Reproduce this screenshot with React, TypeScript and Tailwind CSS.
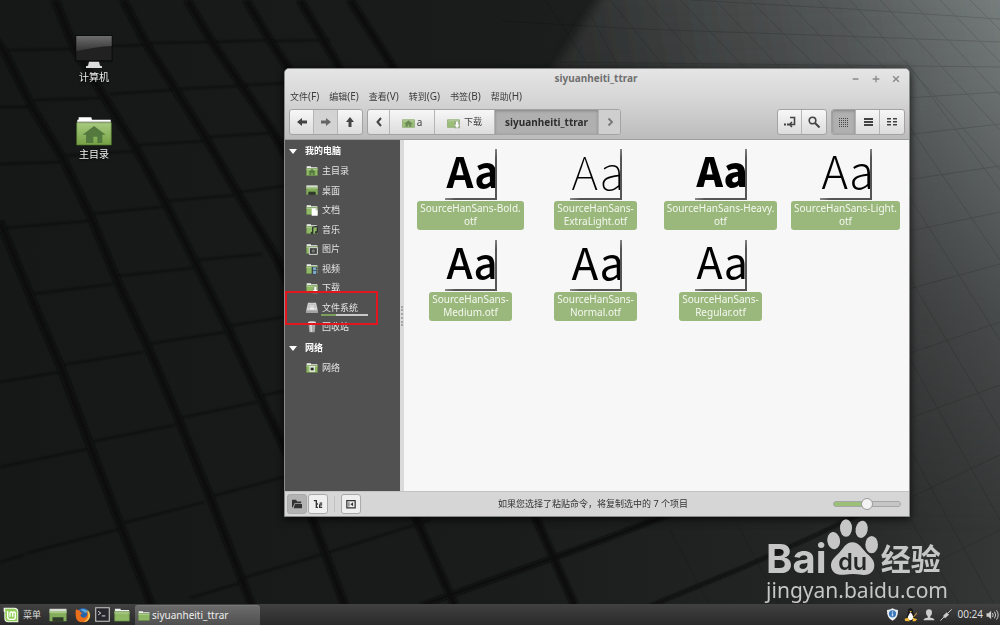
import type { ReactNode } from "react";

const sans = "font-['Noto_Sans','Noto_Sans_CJK_SC',sans-serif]";

type Point = [number, number];

const bands: Point[][] = [
  [[0, 222], [32, 300], [60, 365], [90, 445], [121, 527], [152, 606]],
  [[-4, 40], [5, 53], [32, 107], [62, 157], [90, 215], [120, 287], [148, 347], [178, 418], [210, 497], [242, 580], [252, 606]],
  [[55, 0], [75, 50], [106, 100], [137, 150], [166, 204], [197, 266], [228, 328], [260, 397], [290, 460], [345, 606]],
  [[123, 0], [148, 47], [177, 92], [207, 140], [238, 194], [276, 257], [300, 310]],
  [[187, 0], [212, 42], [242, 86], [273, 132], [300, 180]],
  [[246, 0], [271, 42], [300, 86]],
  [[300, 0], [335, 60], [350, 90]],
  [[350, 0], [390, 62], [400, 80]],
  [[410, 505], [455, 606]],
  [[530, 505], [575, 606]],
];

const seams: Point[][] = [
  [[8, 50], [75, 49]], [[77, 47], [145, 45]], [[150, 43], [208, 42]], [[216, 42], [267, 40]], [[274, 41], [330, 40]],
  [[0, 107], [32, 107]], [[34, 100], [108, 98]], [[110, 94], [172, 90]], [[180, 89], [238, 86]], [[245, 85], [290, 83]],
  [[0, 164], [60, 162]], [[62, 156], [135, 151]], [[138, 145], [205, 141]], [[208, 137], [270, 133]],
  [[5, 228], [88, 221]], [[90, 214], [163, 207]], [[167, 201], [238, 195]], [[241, 192], [284, 186]],
  [[32, 294], [113, 284]], [[118, 276], [193, 268]], [[197, 260], [262, 254]],
  [[0, 382], [60, 372]], [[62, 365], [143, 352]], [[148, 344], [225, 332]], [[228, 326], [284, 317]],
  [[0, 467], [87, 449]], [[90, 442], [175, 425]], [[180, 418], [257, 402]], [[260, 396], [284, 391]],
  [[0, 562], [24, 555]], [[27, 553], [120, 529]], [[123, 523], [205, 502]], [[210, 497], [284, 477]],
  [[190, 598], [240, 583]], [[243, 578], [330, 552], [430, 520]],
];

function Wallpaper() {
  return (
    <svg
      aria-hidden="true"
      className="absolute inset-0 h-full w-full"
      preserveAspectRatio="none"
      viewBox="0 0 1000 625"
    >
      <defs>
        <linearGradient id="wall" x1="0" x2="1" y1="0" y2="0">
          <stop offset="0" stopColor="#161817" />
          <stop offset="0.5" stopColor="#1a1c1b" />
          <stop offset="0.8" stopColor="#232524" />
          <stop offset="1" stopColor="#353737" />
        </linearGradient>
        <linearGradient gradientUnits="userSpaceOnUse" id="beam" x1="570" x2="1000" y1="70" y2="0">
          <stop offset="0" stopColor="#2d2f2e" />
          <stop offset="0.3" stopColor="#414444" />
          <stop offset="0.65" stopColor="#565a5a" />
          <stop offset="1" stopColor="#767d7c" />
        </linearGradient>
        <linearGradient id="fade" x1="0" x2="0" y1="0" y2="1">
          <stop offset="0" stopColor="#fff" />
          <stop offset="0.15" stopColor="#fff" stopOpacity="0.85" />
          <stop offset="0.5" stopColor="#fff" stopOpacity="0.35" />
          <stop offset="0.85" stopColor="#fff" stopOpacity="0" />
        </linearGradient>
        <mask id="fadeMask">
          <rect fill="url(#fade)" height="625" width="1000" />
        </mask>
        <filter id="soft">
          <feGaussianBlur stdDeviation="5" />
        </filter>
        <filter id="edge">
          <feGaussianBlur stdDeviation="1" />
        </filter>
      </defs>
      <rect fill="url(#wall)" height="625" width="1000" />
      <g mask="url(#fadeMask)">
        <path d="M612 -20 L535 100 L535 660 H1030 V-20Z" fill="url(#beam)" filter="url(#soft)" />
      </g>
      <g fill="none" filter="url(#edge)" stroke="#0a0c0b">
        {bands.map((band) => (
          <polyline key={band.join()} points={band.join(" ")} strokeWidth="7" />
        ))}
        {seams.map((seam) => (
          <polyline key={seam.join()} opacity="0.6" points={seam.join(" ")} strokeWidth="1.6" />
        ))}
        <path d="M420 606 L600 541 L670 514" strokeWidth="5" />
        <path d="M650 606 L737 570 L812 537 L860 514" strokeWidth="3" />
      </g>
      <g fill="none" opacity="0.13" stroke="#000">
        <path d="M500 21 L640 29 L840 36 L1000 42 M690 0 L850 9 L1000 19 M560 62 L1000 67" />
        <path d="M545 0 L590 68 M590 14 L618 66 M610 0 L665 68 M645 0 L705 68 M680 0 L745 68 M715 0 L780 68 M750 0 L818 68 M785 0 L852 68 M818 0 L885 68 M850 0 L1000 170 M880 0 L1000 130 M910 0 L1000 95 M940 0 L1000 62 M970 0 L1000 30" />
        <path d="M905 98 L1000 92 M905 135 L1000 124 M905 180 L1000 166 M905 232 L1000 212 M905 290 L1000 264 M905 355 L1000 322 M905 420 L1000 385 M905 500 L1000 455 M880 590 L1000 530" />
        <path d="M905 60 L1000 190 M905 120 L1000 260 M905 190 L1000 340 M905 270 L1000 430 M905 350 L1000 520 M905 440 L995 606 M840 510 L900 606 M730 510 L780 606 M670 530 L710 606 M905 510 L960 606" />
      </g>
    </svg>
  );
}

function FolderIcon({ className = "h-3 w-3", children }: { className?: string; children?: ReactNode }) {
  return (
    <svg aria-hidden="true" className={className} viewBox="0 0 36 36">
      <path d="M2 4h13v3h19v7H2z" fill="#f0f2ee" />
      <path d="M1 10h34v22H1z" fill="#8fb864" />
      <path d="M1 10h34v5H1z" fill="#a9c98a" />
      <path d="M1.500 10.500h33v21h-33z" fill="none" stroke="#55763a" />
      {children}
    </svg>
  );
}

const house = <path d="M18 12 6 22h4v8h6v-6h4v6h6v-8h4z" fill="#567a3e" />;
const downArrow = (
  <>
    <path d="M20 14h15v20H20z" fill="#8fa37c" />
    <path d="M25 15h6v9h4l-7 10-7-10h4z" fill="#fff" />
  </>
);

function DesktopIcon({ className = "h-3 w-3" }: { className?: string }) {
  return (
    <svg aria-hidden="true" className={className} preserveAspectRatio="none" viewBox="0 0 36 36">
      <path d="M1 4h34v7H1z" fill="#d9ddd5" />
      <path d="M1 9h34v23H1z" fill="#84ad5b" />
      <path d="M1 9h34v5H1z" fill="#a7c888" />
      <path d="M7 23h22v10H7z" fill="#2f3b28" />
    </svg>
  );
}

const places: { name: string; icon: ReactNode }[] = [
  { name: "主目录", icon: <FolderIcon>{house}</FolderIcon> },
  { name: "桌面", icon: <DesktopIcon /> },
  {
    name: "文档",
    icon: (
      <FolderIcon>
        <path d="M17 13h13l5 5v17H17z" fill="#fff" />
        <path d="M30 13v5h5" fill="none" stroke="#aaa" strokeWidth="2" />
      </FolderIcon>
    ),
  },
  {
    name: "音乐",
    icon: (
      <FolderIcon>
        <path d="m19 13 15-3v17M20 13v16" fill="none" stroke="#303430" strokeWidth="4" />
        <circle cx="18" cy="30" fill="#303430" r="4" />
        <circle cx="31" cy="28" fill="#303430" r="4" />
      </FolderIcon>
    ),
  },
  {
    name: "图片",
    icon: (
      <FolderIcon>
        <path d="M10 14h24v20H10z" fill="#3b3e3a" stroke="#d9d9d9" strokeWidth="3" />
        <circle cx="22" cy="24" fill="#777" r="5" />
      </FolderIcon>
    ),
  },
  {
    name: "视频",
    icon: (
      <FolderIcon>
        <path d="M17 12h18v22H17z" fill="#38434a" />
        <path d="M21 13h9v9h-9zM21 24h9v9h-9z" fill="#7ba6c4" />
        <path d="M33 13v20" stroke="#ddd" strokeDasharray="3 2" strokeWidth="2" />
      </FolderIcon>
    ),
  },
  { name: "下载", icon: <FolderIcon>{downArrow}</FolderIcon> },
  {
    name: "文件系统",
    icon: (
      <svg aria-hidden="true" className="h-3 w-3" viewBox="0 0 36 36">
        <path d="M6 2h24l5 22v9H1v-9z" fill="#d4d4d4" />
        <path d="M1 25h34v8H1z" fill="#a3a3a3" />
        <ellipse cx="18" cy="13" fill="none" rx="10" ry="7" stroke="#aaa" strokeWidth="2" />
        <path d="M13 17h10l3 5H10z" fill="#f3f3f3" />
      </svg>
    ),
  },
  {
    name: "回收站",
    icon: (
      <svg aria-hidden="true" className="h-3 w-3" viewBox="0 0 36 36">
        <path d="M7 4h22l-3 30H10z" fill="#a9a9a9" />
        <path d="M12 8h5l1 24h-4z" fill="#dedede" />
        <ellipse cx="18" cy="5" fill="#e0e0e0" rx="12" ry="4" />
      </svg>
    ),
  },
];

const files = [
  { label: "SourceHanSans-Bold.\notf", style: "text-[42px] font-bold" },
  { label: "SourceHanSans-\nExtraLight.otf", style: "text-[46px] font-thin" },
  { label: "SourceHanSans-Heavy.\notf", style: "text-[40px] font-black" },
  { label: "SourceHanSans-Light.\notf", style: "text-[45px] font-light" },
  { label: "SourceHanSans-\nMedium.otf", style: "text-[42px] font-medium" },
  { label: "SourceHanSans-\nNormal.otf", style: "text-[44px] font-normal" },
  { label: "SourceHanSans-\nRegular.otf", style: "text-[43px] font-normal" },
];

const menus = [
  ["文件", "(F)"],
  ["编辑", "(E)"],
  ["查看", "(V)"],
  ["转到", "(G)"],
  ["书签", "(B)"],
  ["帮助", "(H)"],
];

function ToolGroup({ children }: { children: ReactNode }) {
  return (
    <div className="flex h-[26px] divide-x divide-[#b5b5b5] overflow-hidden rounded-[3px] border border-[#a3a3a3] bg-linear-to-b from-[#f7f7f7] to-[#dcdcdc]">
      {children}
    </div>
  );
}

function ToolButton({ label, className = "w-6", children }: { label: string; className?: string; children: ReactNode }) {
  return (
    <button aria-label={label} className={`flex items-center justify-center ${className}`} type="button">
      {children}
    </button>
  );
}

function Glyph({ d, className = "size-3" }: { d: string; className?: string }) {
  return (
    <svg aria-hidden="true" className={className} fill="currentColor" viewBox="0 0 12 12">
      <path d={d} />
    </svg>
  );
}

function Toolbar() {
  return (
    <div className="flex items-center px-1 pb-1 text-[#444]">
      <ToolGroup>
        <ToolButton label="后退"><Glyph d="M1 6 6 2v2.500h5v3H6V10z" /></ToolButton>
        <ToolButton className="w-6 bg-[#d3d3d3] text-[#666]" label="前进"><Glyph d="M11 6 6 2v2.500H1v3h5V10z" /></ToolButton>
        <ToolButton label="上级"><Glyph d="M6 1 2 6h2.500v5h3V6H10z" /></ToolButton>
      </ToolGroup>
      <div className="ml-1">
        <ToolGroup>
          <ToolButton className="w-[22px]" label="向左">
            <svg aria-hidden="true" className="size-3" fill="none" stroke="currentColor" strokeWidth="2" viewBox="0 0 12 12"><path d="M8 2 4.500 6 8 10" /></svg>
          </ToolButton>
          <button className="flex w-[45px] items-center justify-center gap-0.5 text-[10px]" type="button">
            <FolderIcon className="size-[13px] opacity-85">{house}</FolderIcon>a
          </button>
          <button className="flex w-[60px] items-center justify-center gap-1 text-[9px]" type="button">
            <FolderIcon className="size-[13px] opacity-85">{downArrow}</FolderIcon>下载
          </button>
          <button className="w-[104px] bg-[#b0b0b0] text-[10px] font-bold text-[#2e2e2e] shadow-[inset_0_1px_3px_rgba(0,0,0,0.25)]" type="button">
            siyuanheiti_ttrar
          </button>
          <ToolButton className="w-[21px] bg-[#cfcfcf] text-[#777]" label="向右">
            <svg aria-hidden="true" className="size-3" fill="none" stroke="currentColor" strokeWidth="1.800" viewBox="0 0 12 12"><path d="M4.500 2.500 8 6 4.500 9.500" /></svg>
          </ToolButton>
        </ToolGroup>
      </div>
      <div className="ml-auto flex gap-1">
        <ToolGroup>
          <ToolButton label="位置">
            <svg aria-hidden="true" className="h-3 w-[13px]" fill="none" stroke="currentColor" strokeWidth="1.600" viewBox="0 0 13 12">
              <path d="M7 1.500h4.500v7H7M9 6 6.500 8.500 9 11" />
              <path d="M1 8.500h2M4 8.500h2" strokeWidth="2" />
            </svg>
          </ToolButton>
          <ToolButton label="搜索">
            <svg aria-hidden="true" className="size-3" fill="none" stroke="currentColor" strokeWidth="1.600" viewBox="0 0 12 12">
              <circle cx="4.500" cy="4.500" r="3.300" />
              <path d="m7 7 4.500 4.500" strokeWidth="2" />
            </svg>
          </ToolButton>
        </ToolGroup>
        <ToolGroup>
          <ToolButton className="w-6 bg-[#b0b0b0] shadow-[inset_0_1px_3px_rgba(0,0,0,0.25)]" label="图标视图">
            <svg aria-hidden="true" className="h-[9px] w-[9px]" shapeRendering="crispEdges" stroke="currentColor" strokeDasharray="1 1" viewBox="0 0 9 9">
              <path d="M0 .5h9M0 2.500h9M0 4.500h9M0 6.500h9M0 8.500h9" />
            </svg>
          </ToolButton>
          <ToolButton label="列表视图"><Glyph d="M2 2h9v2H2zM2 5h9v2H2zM2 8h9v2H2z" /></ToolButton>
          <ToolButton label="紧凑视图">
            <Glyph d="M1 2h4v1.500H1zM1 5h4v1.500H1zM1 8h4v1.500H1zM7 2h4v1.500H7zM7 5h4v1.500H7zM7 8h4v1.500H7z" />
          </ToolButton>
        </ToolGroup>
      </div>
    </div>
  );
}

function SideHeading({ children }: { children: ReactNode }) {
  return (
    <h2 className="flex h-5 items-center gap-2 pl-1 text-[9px] font-bold text-white">
      <svg aria-hidden="true" className="h-[5px] w-2" viewBox="0 0 8 5"><path d="M0 0h8L4 5z" fill="#fff" /></svg>
      {children}
    </h2>
  );
}

function Sidebar() {
  return (
    <nav className="relative w-[115px] shrink-0 bg-[#515151] pt-px text-[9px] text-[#e4e4e4]">
      <SideHeading>我的电脑</SideHeading>
      <ul className="grid h-44 auto-rows-fr">
        {places.map((place) => (
          <li className="flex items-center" key={place.name}>
            <a className="flex items-center gap-1 pl-[21px]" href="#place">
              {place.icon}
              {place.name}
            </a>
          </li>
        ))}
      </ul>
      <div className="pt-px">
        <SideHeading>网络</SideHeading>
      </div>
      <a className="flex h-5 items-center gap-1 pl-[21px]" href="#network">
        <FolderIcon>
          <path d="M10 12h17v18H10z" fill="#dfe5da" />
          <path d="M14 17h9v8h-9z" fill="#26301f" />
        </FolderIcon>
        网络
      </a>
      <div className="absolute left-[36px] top-[174px] h-0.5 w-[47px] bg-linear-to-r from-[#7d9f5c] from-32% to-[#c9c9c9] to-32%" />
      <div className="pointer-events-none absolute left-0 top-[151px] h-[34px] w-[93px] border-2 border-[#e3161e]" />
    </nav>
  );
}

function FileItem({ label, style }: { label: string; style: string }) {
  return (
    <li className="flex h-[91px] flex-col items-center">
      <div
        aria-hidden="true"
        className={`flex h-[51px] w-[52px] items-center overflow-hidden border-r-2 border-b-2 border-[#777] pb-2 pl-0.5 font-['Noto_Sans_CJK_SC',sans-serif] leading-none text-black [border-image:linear-gradient(135deg,#f7f7f7_30%,#555_60%)_2] ${style}`}
      >
        Aa
      </div>
      <span className="mt-px whitespace-pre rounded-[3px] bg-[#9ab87c] px-[3px] pb-0.5 pt-px text-center text-[10px] leading-[13px] text-[#f4f7f0]">
        {label}
      </span>
    </li>
  );
}

function StatusBar() {
  const box = "flex size-5 items-center justify-center rounded-[3px] border border-[#a9a9a9]";
  return (
    <footer className="flex h-[25px] items-center border-t border-[#c3c3c3] bg-[#d6d6d6] px-0.5 text-[#333]">
      <button aria-label="位置" className={`${box} bg-[#b3b3b3]`} type="button">
        <Glyph className="size-[10px]" d="M0 1h5l1 2h5v2H3L1 10H0zM3.500 6H12v5H2z" />
      </button>
      <button aria-label="树形" className={`${box} ml-px bg-[#efefef]`} type="button">
        <svg aria-hidden="true" className="size-[10px]" fill="none" stroke="currentColor" strokeWidth="1.600" viewBox="0 0 12 12">
          <path d="M1 2h3v8h2M4 6h2M8 5h3M11 7H8v3h3" />
        </svg>
      </button>
      <div className="mx-1.5 h-4 w-px bg-[#c2c2c2]" />
      <button aria-label="侧边栏" className={`${box} bg-[#efefef]`} type="button">
        <svg aria-hidden="true" className="size-[10px]" fill="none" stroke="currentColor" strokeWidth="1.500" viewBox="0 0 12 12">
          <path d="M1 2h10v8.500H1z" />
          <path d="M3 4h1v5H3zM8.500 3.800v5L5.300 6.300z" fill="currentColor" stroke="none" />
        </svg>
      </button>
      <p className="flex-1 pr-2 text-center text-[9px] text-[#333]">如果您选择了粘贴命令，将复制选中的 7 个项目</p>
      <input
        aria-label="缩放"
        className="mr-1.5 h-1.5 w-[68px] appearance-none rounded-full border border-[#a6a6a6] bg-linear-to-r from-[#9cbf78] from-50% to-[#c6c6c6] to-50% [&::-webkit-slider-thumb]:size-3 [&::-webkit-slider-thumb]:appearance-none [&::-webkit-slider-thumb]:rounded-full [&::-webkit-slider-thumb]:border [&::-webkit-slider-thumb]:border-[#999] [&::-webkit-slider-thumb]:bg-[#f3f3f3]"
        defaultValue={50}
        type="range"
      />
    </footer>
  );
}

function FileWindow() {
  return (
    <section className="absolute bottom-[108px] left-[284px] right-[90px] top-[68px] flex flex-col overflow-hidden rounded-t-[5px] border border-[#8a8a8a] bg-[#d6d6d6] shadow-[0_2px_9px_rgba(0,0,0,0.8)]">
      <header className="flex h-[71px] shrink-0 flex-col border-b border-[#9e9e9e] bg-linear-to-b from-[#e5e5e5] via-[#d5d5d5] via-45% to-[#bcbcbc]">
        <div className="flex h-[19px] items-center pl-14 pr-2 text-[#8a8a8a]">
          <h1 className="flex-1 text-center text-[10px] font-bold text-[#707070]">siyuanheiti_ttrar</h1>
          <div className="flex gap-2.5">
            {["M2 5.200h7v1.600H2z", "M2 5.200h3.200V2h1.600v3.200H10v1.600H6.800V10H5.200V6.800H2z", "m3.200 2 2.800 2.800L8.800 2 10 3.200 7.200 6 10 8.800 8.800 10 6 7.200 3.200 10 2 8.800 4.800 6 2 3.200z"].map((d, i) => (
              <button aria-label={["最小化", "最大化", "关闭"][i]} key={d} type="button">
                <Glyph className="size-[10px]" d={d} />
              </button>
            ))}
          </div>
        </div>
        <div className="flex flex-1 items-center gap-2.5 px-[5px] pb-1.5 text-[10px] text-[#3c3c3c]">
          {menus.map(([name, key]) => (
            <button className="leading-none" key={name} type="button">
              <span className="text-[9px]">{name}</span>
              {key}
            </button>
          ))}
        </div>
        <Toolbar />
      </header>
      <div className="flex min-h-0 flex-1">
        <Sidebar />
        <div className="flex w-1 shrink-0 items-center justify-center bg-[#dadada]">
          <div className="h-5 border-l-2 border-dotted border-[#a5a5a5]" />
        </div>
        <ul className="grid flex-1 grid-cols-4 content-start bg-[#f7f7f7] pl-1 pr-px pt-[9px]">
          {files.map((file) => (
            <FileItem key={file.label} {...file} />
          ))}
        </ul>
      </div>
      <StatusBar />
    </section>
  );
}

function Watermark() {
  return (
    <div className="absolute bottom-[22px] right-[52px] text-[#c6c6c6]">
      <div className="flex h-[58px] items-end">
        <span className="font-['Inter','Liberation_Sans',sans-serif] text-[40px] font-bold leading-9">Bai</span>
        <svg aria-hidden="true" className="h-[58px] w-[52px]" fill="currentColor" viewBox="0 0 156 174">
          <ellipse cx="20" cy="65" rx="19" ry="26" transform="rotate(-8 20 65)" />
          <ellipse cx="57" cy="27" rx="18" ry="26" />
          <ellipse cx="104" cy="31" rx="18" ry="26" transform="rotate(10 104 31)" />
          <ellipse cx="134" cy="77" rx="19" ry="26" />
          <path d="M76 70c20 0 28 18 42 32 14 13 25 22 24 39-2 22-20 29-38 26-18-3-34-3-52 0-20 3-38-5-40-26-1-17 11-26 24-39 14-14 20-32 40-32z" />
          <text fill="#252726" fontFamily="Inter, sans-serif" fontSize="70" fontWeight="600" textAnchor="middle" x="77" y="153">du</text>
        </svg>
        <span className="pb-1 pl-0.5 font-['Noto_Sans_CJK_SC',sans-serif] text-[30px] font-bold leading-8">经验</span>
      </div>
      <p className="font-['Noto_Sans',sans-serif] text-[21px] leading-[26px]">jingyan.baidu.com</p>
    </div>
  );
}

function Taskbar() {
  return (
    <footer className="relative mt-auto flex h-[21px] items-center bg-linear-to-b from-[#414141] to-[#2a2a2a] px-[3px] text-[10px] text-[#dcdcdc]">
      <button className="flex items-center gap-1 text-[9px]" type="button">
        <svg aria-hidden="true" className="size-4" viewBox="0 0 48 48">
          <path d="M2 2h32a12 12 0 0 1 12 12v32H16A12 12 0 0 1 4 34V14H2z" fill="#f2f7ec" />
          <path d="M6 5h26a11 11 0 0 1 11 11v27H17A10 10 0 0 1 7 33V11z" fill="#93cf58" />
          <path d="M14 12v18q0 7 7 7h10q6 0 6-7V19q0-4-4-4t-4 4v10M29 19q0-4-4-4t-4 4v10" fill="none" stroke="#fff" strokeWidth="4" />
        </svg>
        菜单
      </button>
      <div className="ml-2 flex items-center gap-1">
        <button aria-label="显示桌面" className="mr-1" type="button"><DesktopIcon className="h-4 w-[18px]" /></button>
        <button aria-label="Firefox" type="button">
          <svg aria-hidden="true" className="size-4" viewBox="0 0 48 48">
            <circle cx="24" cy="24" fill="#2863a8" r="21" />
            <path d="M16 8q14-6 23 6l-8 4-5-4z" fill="#58a9df" />
            <path d="M3 7q8 4 12 3-2 5 7 8l-6 6q2 9 11 8 10-1 10-13l-4-6q12 4 11 16-2 17-20 17Q3 45 2 26 1 15 3 7z" fill="#e96f1b" />
            <path d="M37 8q12 10 7 24-5 12-18 13 14-9 14-20z" fill="#f8c34a" />
          </svg>
        </button>
        <button aria-label="终端" type="button">
          <svg aria-hidden="true" className="size-[15px]" viewBox="0 0 42 42">
            <path d="M2 2h38v38H2z" fill="#29272e" stroke="#c9c9c9" strokeWidth="3" />
            <path d="m9 12 7 5-7 5M19 25h10" fill="none" stroke="#eee" strokeWidth="2.500" />
          </svg>
        </button>
        <button aria-label="文件" type="button"><FolderIcon className="size-4" /></button>
      </div>
      <button className="ml-[5px] flex h-5 w-[125px] items-center gap-0.5 self-end rounded-t-[3px] border-t border-[#777] bg-linear-to-b from-[#6b6b6b] to-[#505050] pl-[3px] text-[#eee]" type="button">
        <FolderIcon />
        siyuanheiti_ttrar
      </button>
      <div className="ml-auto flex items-center gap-[5px]">
        <svg aria-hidden="true" className="size-[13px]" viewBox="0 0 40 40">
          <path d="M20 1q8 5 17 5 1 24-17 33Q2 30 3 6q9 0 17-5z" fill="#e8edf0" />
          <circle cx="20" cy="18" fill="#3b78bb" r="11" />
          <path d="M18 10h4v4h-4zM18 16h4v9h-4z" fill="#c6dcf0" />
        </svg>
        <svg aria-hidden="true" className="size-[14px]" viewBox="0 0 40 40">
          <path d="M18 1q8 0 8 10 1 6 6 13 3 10-4 13H12Q4 33 7 24q5-7 4-14 0-9 7-9z" fill="#191919" />
          <path d="M18 12q6 4 8 12 1 9-7 11-9-1-8-10z" fill="#fff" />
          <path d="m15 8 8 1-4 4zM2 31l9-3 6 10-14-1zM24 38l2-10 12 4-6 6z" fill="#f2ba35" />
          <path d="m27 26 10-12" stroke="#b98b42" strokeWidth="3" />
        </svg>
        <svg aria-hidden="true" className="size-3 text-[#ccc]" fill="currentColor" viewBox="0 0 36 36">
          <path d="M18 1q9 0 9 10 0 7-5 10v5q12 1 13 8H1q1-7 13-8v-5q-5-3-5-10Q9 1 18 1z" />
        </svg>
        <svg aria-hidden="true" className="size-3 text-[#ccc]" viewBox="0 0 36 36">
          <path d="M1 35 13 23M23 13 35 1" stroke="currentColor" strokeWidth="3" />
          <path d="m9 21 11-11 7 7-12 11z" fill="currentColor" />
        </svg>
        <time className="-mr-0.5">00:24</time>
        <svg aria-hidden="true" className="-mr-0.5 h-3 w-[13px]" fill="none" stroke="#ccc" strokeWidth="3" viewBox="0 0 38 36">
          <path d="M1 13h6l8-8v26l-8-8H1z" fill="#ccc" stroke="none" />
          <path d="M19 12q4 6 0 12M25 8q7 10 0 20M31 4q10 14 0 28" />
        </svg>
      </div>
    </footer>
  );
}

export default function App() {
  return (
    <main className={`relative flex min-h-screen flex-col overflow-hidden bg-[#151716] ${sans}`} lang="zh-CN">
      <Wallpaper />
      <div className="relative ml-[70px] mt-[34px] flex w-12 flex-col gap-8 text-[10px] leading-4 text-[#eee] [text-shadow:0_1px_2px_#000]">
        <a className="flex flex-col items-center" href="#computer">
          <svg aria-hidden="true" className="h-[35px] w-[38px]" viewBox="0 0 114 105">
            <defs>
              <linearGradient id="screen" x1="0" x2="0" y1="0" y2="1">
                <stop offset="0" stopColor="#6d6d6d" />
                <stop offset="1" stopColor="#343434" />
              </linearGradient>
            </defs>
            <path d="M1 3h112v80H1z" fill="#0b0b0b" />
            <path d="M4 6h106v73H4z" fill="#212121" />
            <path d="M4 6h106v30Q60 38 4 52z" fill="url(#screen)" />
            <path d="M42 83h30l3 12 6 2v5H33v-5l6-2z" fill="#dcdcdc" />
          </svg>
          计算机
        </a>
        <a className="flex flex-col items-center" href="#home">
          <svg aria-hidden="true" className="h-[29px] w-9" viewBox="0 0 108 87">
            <defs>
              <linearGradient id="home" x1="0" x2="0" y1="0" y2="1">
                <stop offset="0" stopColor="#a9cb80" />
                <stop offset="1" stopColor="#74a044" />
              </linearGradient>
            </defs>
            <path d="M8 1h38l2 7h56v14H4V8h4z" fill="#fff" />
            <path d="M4 12h100v5H4z" fill="#cfcfcf" />
            <path d="M2 17h104v67H2z" fill="url(#home)" stroke="#4c7128" strokeWidth="2" />
            <path d="M54 27 20 53h10v25h22V59h12v19h15V53h10z" fill="#54793f" />
          </svg>
          主目录
        </a>
      </div>
      <FileWindow />
      <Watermark />
      <Taskbar />
    </main>
  );
}
